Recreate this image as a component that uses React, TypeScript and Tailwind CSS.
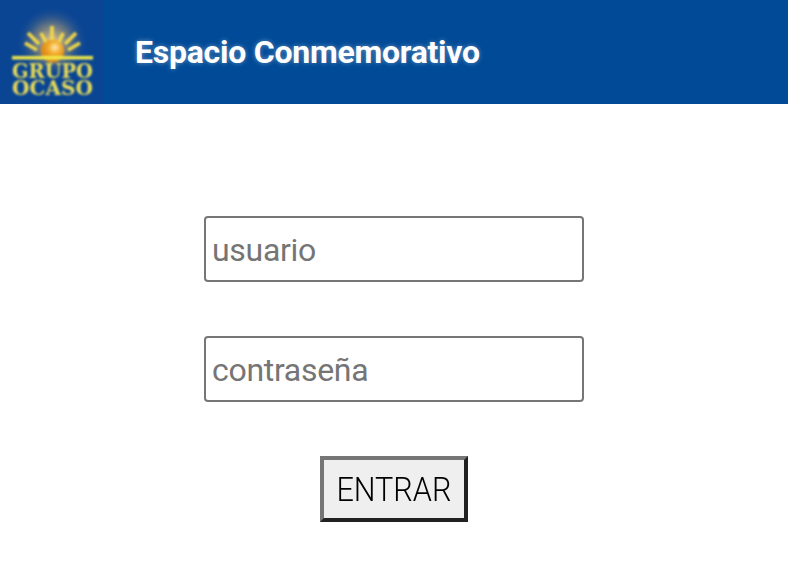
function Logo() {
  return (
    <svg width="104" height="104" viewBox="0 0 104 104" className="shrink-0">
      <defs>
        <radialGradient id="glow">
          <stop offset="0%" stopColor="#ffd98a" stopOpacity="0.95" />
          <stop offset="50%" stopColor="#b9a070" stopOpacity="0.5" />
          <stop offset="100%" stopColor="#0a4594" stopOpacity="0" />
        </radialGradient>
        <radialGradient id="sun" cx="60%" cy="35%">
          <stop offset="0%" stopColor="#ffe9b0" />
          <stop offset="50%" stopColor="#f4b030" />
          <stop offset="100%" stopColor="#e08c18" />
        </radialGradient>
        <filter id="soft"><feGaussianBlur stdDeviation="0.8" /></filter>
      </defs>
      <rect width="104" height="104" fill="#0a4594" />
      <circle cx="52" cy="42" r="36" fill="url(#glow)" />
      <g filter="url(#soft)">
        <circle cx="52.500" cy="51" r="11.500" fill="url(#sun)" />
        <g stroke="#f0d84a" strokeWidth="3.600">
          <path d="M52 26v14M28 33l11 11M41 33l5 9M25 43l12 7M76 33l-11 11M63 33l-4 9M80 43l-12 7" />
        </g>
        <rect x="12" y="56" width="81" height="3.500" fill="#f2e846" />
        <text x="12" y="78" textLength="81" lengthAdjust="spacingAndGlyphs" fill="#e6da58" fontFamily="'DejaVu Serif', serif" fontWeight="700" fontSize="20.500">GRUPO</text>
        <text x="12" y="95" textLength="81" lengthAdjust="spacingAndGlyphs" fill="#e6da58" fontFamily="'DejaVu Serif', serif" fontWeight="700" fontSize="20.500">OCASO</text>
      </g>
    </svg>
  )
}

export default function App() {
  return (
    <div className="min-h-[579px] bg-white font-['Roboto',sans-serif]">
      <header className="flex h-[104px] items-center bg-[#004a97]">
        <Logo />
        <h1 className="ml-[31px] text-[32px] font-bold tracking-[-0.25px] text-white [text-shadow:0_0_5px_rgba(255,255,255,0.4)]">
          Espacio Conmemorativo
        </h1>
      </header>
      <form className="flex flex-col items-center gap-[54px] pt-[112px]">
        <input
          type="text"
          placeholder="usuario"
          className="h-[66px] w-[380px] rounded-[4px] border-2 border-[#767676] bg-white px-[6px] pt-[2px] text-[32px] tracking-[-0.3px] outline-none placeholder:text-[#757575]"
        />
        <input
          type="password"
          placeholder="contraseña"
          className="h-[66px] w-[380px] rounded-[4px] border-2 border-[#767676] bg-white px-[6px] pt-[2px] text-[32px] tracking-[-0.3px] outline-none placeholder:text-[#757575]"
        />
        <button
          type="button"
          className="h-[66px] w-[148px] border-4 border-t-[#767676] border-l-[#767676] border-r-[#212121] border-b-[#212121] bg-[#efefef] text-[34px] font-light text-black"
        >
          <span className="inline-block scale-x-90">ENTRAR</span>
        </button>
      </form>
    </div>
  )
}
